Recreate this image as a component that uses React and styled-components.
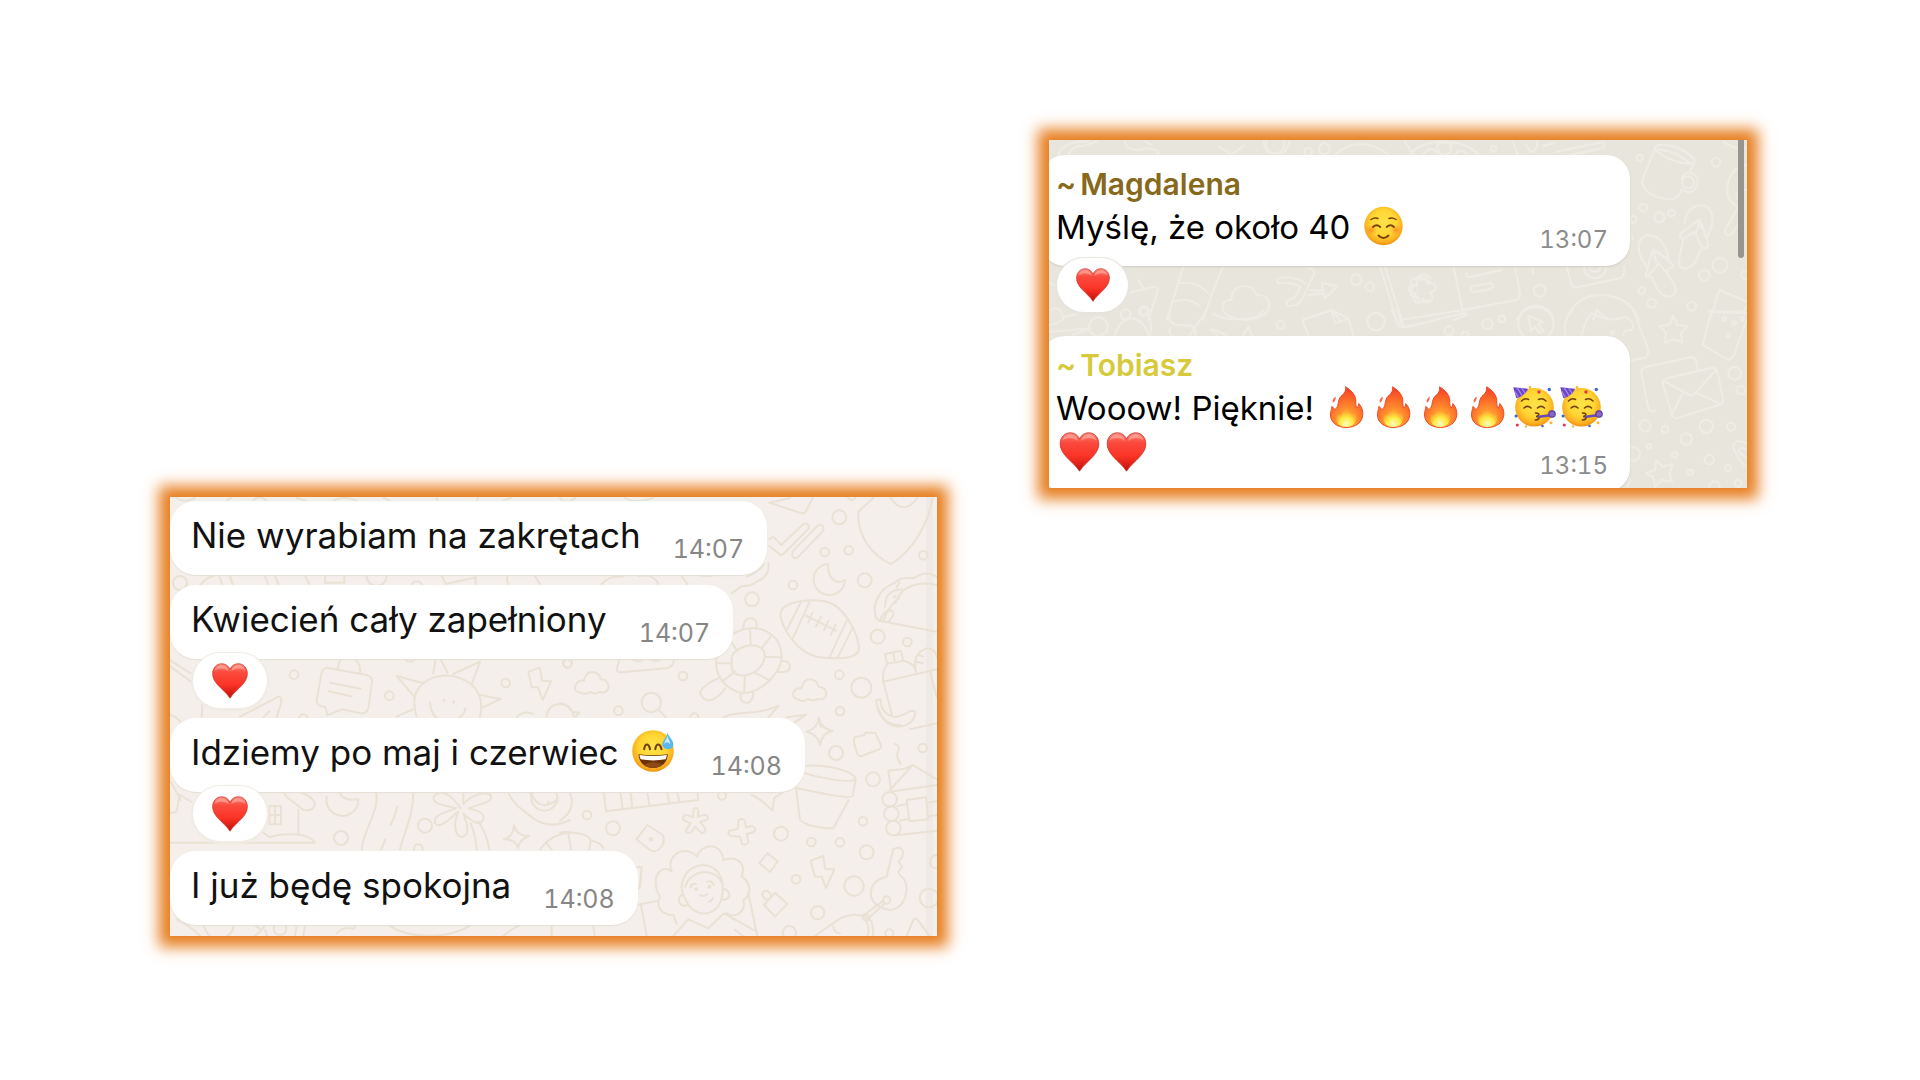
import React, { useId } from "react";
import styled, { createGlobalStyle } from "styled-components";

const GlobalStyle = createGlobalStyle`
  *, *::before, *::after { box-sizing: border-box; }
  body { margin: 0; background: #fff; }
`;

const Page = styled.main`
  display: grid;
  grid-template-columns: 767fr 698fr;
  gap: 112px;
  align-items: start;
  padding: 140px 173px 140px 170px;
  font-family: Inter, "Liberation Sans", sans-serif;
`;

const Panel = styled.section`
  position: relative;
  overflow: hidden;
  margin-top: ${(p) => p.$drop || 0}px;
  background: ${(p) => p.$bg};
  box-shadow: 0 0 14px 11px #e77e1f;
`;

const Wallpaper = styled.svg`
  position: absolute;
  inset: 0;
  width: 100%;
  height: 100%;
  fill: none;
  stroke: ${(p) => p.$ink};
  stroke-width: 6;
  stroke-linecap: round;
  stroke-linejoin: round;
`;

const EdgeShade = styled.div`
  position: absolute;
  top: 0;
  bottom: 0;
  right: 4px;
  width: 7px;
  background: #eeeae5;
`;

const ScrollThumb = styled.div`
  position: absolute;
  top: 0;
  right: 3px;
  width: 6px;
  height: 118px;
  border-radius: 0 0 3px 3px;
  background: #969590;
`;

const List = styled.ul`
  position: relative;
  display: flex;
  flex-direction: column;
  gap: ${(p) => p.$gap}px;
  margin: 0;
  padding: ${(p) => p.$pad};
  list-style: none;
`;

const Item = styled.li`
  display: flex;
  flex-direction: column;
  align-items: flex-start;
`;

const Bubble = styled.article`
  display: flex;
  align-items: flex-end;
  gap: 32px;
  padding: 12px 23px 10px 21px;
  border-radius: 26px;
  background: #fff;
  box-shadow: 0 1px 1px #e4dfd7;
`;

const Text = styled.p`
  margin: 0;
  padding-bottom: 8px;
  font-size: 35px;
  line-height: 44px;
  color: #111;
  white-space: nowrap;
`;

const Time = styled.time`
  font-size: 25px;
  font-variant-numeric: tabular-nums;
  line-height: 32px;
  color: #868686;
`;

const GroupBubble = styled.article`
  display: grid;
  align-self: stretch;
  margin: 0 0 ${(p) => (p.$last ? -4 : 0)}px -8px;
  padding: 9px 22px 11px 15px;
  border-radius: 24px;
  background: #fff;
  box-shadow: 0 1px 2px #cfccc2;
`;

const Sender = styled.h2`
  display: flex;
  gap: 4px;
  margin: 0 0 1px;
  font-size: 30px;
  font-weight: 600;
  line-height: 40px;
  color: ${(p) => p.$color};
`;

const GroupText = styled.p`
  grid-area: 2 / 1;
  margin: 0;
  padding-bottom: 5px;
  font-size: 33px;
  line-height: 45px;
  color: #000;
  white-space: nowrap;
`;

const GroupTime = styled.time`
  grid-area: 2 / 1;
  align-self: end;
  justify-self: end;
  font-size: 24px;
  font-variant-numeric: tabular-nums;
  line-height: 30px;
  color: #8c8c8c;
`;

const Reaction = styled.button`
  position: relative;
  display: grid;
  place-items: center;
  width: ${(p) => p.$w}px;
  height: ${(p) => p.$h}px;
  margin: ${(p) => p.$m};
  padding: 0;
  border: 0;
  border-radius: 28px;
  background: #fff;
  box-shadow: 0 1px 1px 2px ${(p) => p.$ring};
`;

const Glyph = styled.svg`
  display: inline-block;
  width: ${(p) => p.$w}px;
  height: ${(p) => p.$h}px;
  vertical-align: ${(p) => p.$shift || 0}px;
`;

function Heart({ w = 36, h = 36, shift }) {
  const id = useId();
  return (
    <Glyph $w={w} $h={h} $shift={shift} viewBox="0 0 40 40" role="img" aria-label="heart">
      <defs>
        <linearGradient id={id} x1="0" y1="0" x2="0" y2="1">
          <stop offset="0" stopColor="#ff8a7c" />
          <stop offset=".25" stopColor="#fb4a3e" />
          <stop offset=".6" stopColor="#fb3527" />
          <stop offset="1" stopColor="#c30d0a" />
        </linearGradient>
      </defs>
      <path
        d="M20 39.2C17 34 11 29.500 6.500 24.500C2.800 20.300.7 16.500.7 11.800C.7 5.500 5 .8 10.700.8C15 .8 18.500 3.200 20 7.200C21.500 3.200 25 .8 29.300.8C35 .8 39.300 5.500 39.300 11.800C39.300 16.500 37.200 20.300 33.500 24.500C29 29.500 23 34 20 39.200Z"
        fill={`url(#${id})`}
        stroke="#c8312b"
        strokeWidth=".8"
      />
      <path d="M3 8.500C4.500 4 8 2.500 11 2.600C15 2.800 17.500 5 18.500 9C14 5.500 8 5 3 8.500ZM21.500 9C22.500 5 25 2.800 29 2.600C32 2.500 35.500 4 37 8.500C32 5 26 5.500 21.500 9Z" fill="#ffb3a8" opacity=".6" />
    </Glyph>
  );
}

function FaceDefs({ id }) {
  return (
    <defs>
      <radialGradient id={id} cx=".5" cy=".42" r=".6">
        <stop offset="0" stopColor="#ffe34a" />
        <stop offset=".55" stopColor="#ffd633" />
        <stop offset=".85" stopColor="#fbab1d" />
        <stop offset="1" stopColor="#e8890f" />
      </radialGradient>
    </defs>
  );
}

function Sweat() {
  const id = useId();
  return (
    <Glyph $w={50} $h={42} $shift={-7} viewBox="-4 0 50 42" role="img" aria-label="grinning face with sweat">
      <FaceDefs id={id} />
      <circle cx="21" cy="21" r="20.800" fill={`url(#${id})`} />
      <path d="M12.200 19.200C13 13 16.800 13 18 19.200M23.300 19.200C24.200 13 28 13 29.500 19.200" fill="none" stroke="#70400d" strokeWidth="2.100" strokeLinecap="round" />
      <path d="M6.500 24.300Q21 26 35.800 24.300C35.500 33 29 38 21.200 38C13 38 7 33 6.500 24.300Z" fill="#6b3208" />
      <path d="M7.500 25Q21 27 34.800 25C34.600 27 34.200 28.300 33.600 29.300Q21 31.500 8.800 29.300C8 28 7.600 26.500 7.500 25Z" fill="#fff" />
      <path d="M12 34.500Q21 30 30.500 34.500Q26 38 21 38Q16 38 12 34.500Z" fill="#8d4a14" />
      <path d="M35.500 3C37.500 7.500 41.400 10.500 41.400 14.500C41.400 17.500 39 19.200 36 19.200C33 19.200 30.200 17.300 30.400 14C30.700 10.500 34.500 8 35.500 3Z" fill="#5bb8ee" />
      <path d="M35.500 5.500C36 9 38.500 11 38 14Q35 10.500 32 14C32.500 11 35 9 35.500 5.500Z" fill="#c9edff" />
    </Glyph>
  );
}

function Smile() {
  const id = useId();
  const blush = useId();
  return (
    <Glyph $w={47} $h={40} $shift={-7} viewBox="-3.500 0 47 40" role="img" aria-label="smiling face">
      <FaceDefs id={id} />
      <defs>
        <radialGradient id={blush}>
          <stop offset="0" stopColor="#ff7a28" stopOpacity=".75" />
          <stop offset="1" stopColor="#ff9a28" stopOpacity="0" />
        </radialGradient>
      </defs>
      <circle cx="20" cy="20" r="19.200" fill={`url(#${id})`} />
      <ellipse cx="7.500" cy="24" rx="6.500" ry="5.500" fill={`url(#${blush})`} />
      <ellipse cx="32.500" cy="24" rx="6.500" ry="5.500" fill={`url(#${blush})`} />
      <g fill="none" stroke="#75420c" strokeWidth="1.500" strokeLinecap="round">
        <path d="M7.500 13.500Q11 11 14.500 12.500M25.500 12.500Q29 11 32.500 13.500" />
        <path d="M9.500 21Q13 17.600 16.800 21M23.200 21Q27 17.600 30.500 21" strokeWidth="1.800" />
        <path d="M15 29.500Q20 34.500 25 29.500" strokeWidth="1.800" />
      </g>
    </Glyph>
  );
}

function Fire() {
  const id = useId();
  const core = useId();
  return (
    <Glyph $w={47} $h={42} $shift={-8} viewBox="-6.500 0 47 42" role="img" aria-label="fire">
      <defs>
        <radialGradient id={id} cx=".5" cy=".85" r=".8">
          <stop offset="0" stopColor="#ffc23c" />
          <stop offset=".4" stopColor="#ff8f2e" />
          <stop offset=".75" stopColor="#fa6228" />
          <stop offset="1" stopColor="#f0442a" />
        </radialGradient>
        <radialGradient id={core} cx=".5" cy=".85" r=".7">
          <stop offset="0" stopColor="#fffcc0" />
          <stop offset=".5" stopColor="#ffe93e" />
          <stop offset="1" stopColor="#ffa62e" stopOpacity=".3" />
        </radialGradient>
      </defs>
      <path
        d="M16 .8C21 3.500 26.500 9 26.300 15C26.200 18.500 26.500 21 27.500 22C29 21 28.800 19 29.300 17.600C32.500 21 33.500 25 33.300 28.500C33 36.500 26 41.500 16.800 41.500C7.500 41.500 1 36 1 29C.8 25.500 2.500 23 2.300 20.500C4 21 4.600 23.500 5.500 23.500C9.500 21 8 15.500 10.500 11.500C13 8.500 17 6.500 16 .8Z"
        fill={`url(#${id})`}
        stroke="#ee4a2a"
        strokeWidth="1"
      />
      <path d="M17 21C18.500 25 20 27 22.500 28C24 29 25 27 25.500 25.500C28.500 32 26.500 41 16.800 41C8.500 41 5.500 34.500 7.500 28.500C9.500 30.500 10.500 29 11.500 28C14 26 16 24.500 17 21Z" fill={`url(#${core})`} />
      <path d="M6.200 10.500C4 12 2.500 14 3.300 16.800C5.500 15.500 6.500 13.500 6.200 10.500Z" fill="#f4694f" />
    </Glyph>
  );
}

function Party() {
  const id = useId();
  return (
    <Glyph $w={47} $h={42} $shift={-8} viewBox="-1.500 0 47 42" role="img" aria-label="partying face">
      <FaceDefs id={id} />
      <circle cx="22" cy="21.300" r="19.300" fill={`url(#${id})`} />
      <path d="M.8 1.200L15.500 2.800C14 7 8.500 11.500 3.800 12.300Z" fill="#6a45c4" />
      <path d="M4.500 1.600L9.800 9.800M9 2L12.800 7.500M2 5L6 11.500" stroke="#a88bf0" strokeWidth="1.300" />
      <g fill="none" stroke="#70400d" strokeWidth="1.600" strokeLinecap="round">
        <path d="M9 15Q12.500 11.500 16 13.500M26 13.500Q30 11.500 33.500 15" />
        <path d="M11.500 22Q15 18.600 18.500 22M25 22Q28.500 18.600 32 22" />
        <path d="M23 27Q27.500 27 26 29.300Q24.500 30.500 23.500 30.500Q27.500 30.500 26.500 32.500Q25.500 34 22.800 34" />
      </g>
      <path d="M26.500 30.800L38 29.300" stroke="#6b4aae" strokeWidth="2.600" strokeLinecap="round" />
      <circle cx="39.500" cy="28" r="3.200" fill="#8566ca" stroke="#5b3da0" strokeWidth="1.200" />
      <g fill="#3d68c8"><circle cx="36.800" cy="3.500" r="1.700" /><circle cx="3.600" cy="30" r="1.600" /><circle cx="30" cy="40" r="1.300" /></g>
      <g fill="#e0374b"><circle cx="26.500" cy="6" r="1.700" /><circle cx="4.800" cy="39" r="1.600" /></g>
      <g fill="#f4b73e"><circle cx="17.500" cy="1.500" r="1.400" /><circle cx="38.500" cy="36.800" r="1.500" /><circle cx="13.500" cy="40.500" r="1.200" /></g>
    </Glyph>
  );
}

/* Doodles are drawn on a grid three times finer than the panel. */
function Doodles({ x, y, dots, d }) {
  return (
    <g transform={`translate(${x} ${y}) scale(${1 / 3})`}>
      {dots.map(([cx, cy, r]) => (
        <circle key={`${cx}-${cy}-${r}`} cx={cx} cy={cy} r={r} />
      ))}
      <path d={d} />
    </g>
  );
}

const beige = [
  {
    x: -20,
    y: -27,
    dots: [[90, 339, 21], [432, 614, 13], [718, 677, 13], [1067, 639, 13], [1253, 580, 13], [882, 691, 2], [911, 696, 2], [460, 745, 12], [680, 318, 30], [800, 352, 18], [780, 555, 20]],
    d: `M80 84Q105 100 135 84M230 92L245 82M310 92Q325 72 350 92M440 84L470 92M550 92Q580 75 620 92M700 84L720 92M860 84L862 92M980 92L985 82M1060 92L1085 82
      M150 345Q170 322 190 318M208 318L216 342M240 318L247 342M345 318L354 342M375 318L385 342M465 318L478 342M525 318V338H583V318M875 318L888 342L978 322L976 342M1073 318Q1068 330 1075 342M1155 318L1170 342
      M62 572L122 610M62 590L130 640M62 735Q95 745 100 780M150 670Q160 700 155 740M270 740L385 680Q398 680 393 700L380 742M340 742L357 724
      M563 598Q570 550 600 560Q635 575 630 608M535 594L650 615Q668 620 666 636L655 715Q650 732 632 730L575 718L532 736L527 712Q498 708 500 690L515 608Q520 592 535 594M540 638L632 656M536 664L603 679
      M800 740Q775 660 838 628Q900 600 960 640Q1005 675 990 740M840 698Q845 755 893 752Q940 750 946 715M850 610L858 560M868 560L893 608M910 612L990 575L966 640M992 675L1052 687L998 712M793 680L740 618L820 640M740 740L788 718
      M1135 605L1170 593L1176 632L1203 634L1178 690L1164 652L1145 652ZM1100 742Q1120 720 1150 732M1190 740Q1195 700 1235 703Q1258 705 1260 720`,
  },
  {
    x: 390,
    y: -27,
    dots: [[838, 142, 21], [794, 246, 13], [866, 241, 13], [1090, 256, 13], [914, 331, 21], [699, 345, 13], [576, 388, 21], [953, 500, 21], [1042, 516, 13], [22, 580, 13], [369, 618, 13], [838, 614, 13], [904, 653, 30], [840, 723, 13], [274, 697, 29], [175, 722, 13], [403, 742, 12], [1004, 380, 2], [1015, 384, 2], [1005, 398, 2]],
    d: `M0 85Q20 105 45 84M195 84Q225 102 280 84M628 98L690 84M628 98L725 130Q735 132 740 120L758 84M865 84Q875 96 885 84
      M895 125L940 84M895 125C890 200 940 260 994 282C1060 240 1105 160 1118 84M992 84Q1030 140 1072 84
      M628 208Q638 196 648 208L664 225L728 164Q740 155 746 168Q748 174 742 180L670 252Q662 258 655 250L628 228M700 242L772 168Q786 158 790 172Q792 178 786 186L715 260Q705 270 698 260Q694 252 700 242
      M805 281A47 47 0 1 0 855 330C835 345 800 330 805 281M625 280Q630 320 590 335Q575 350 545 348L515 370M560 320Q590 310 612 283M125 342Q150 315 185 320Q210 305 240 318Q280 310 295 342M365 318L382 342M420 316Q440 322 460 316
      M662 440C655 395 740 385 800 395C860 410 895 500 897 535C895 570 820 568 770 560C710 545 670 480 662 440M680 480L722 398M697 508L748 397M808 563L860 452M833 563L877 475M738 437L828 482M757 428L745 458M783 440L768 470M805 453L792 480M826 465L813 494
      M1130 320C1100 300 1075 315 1060 325Q1020 320 1005 338C960 355 935 400 947 440Q955 455 975 455L1130 485M970 452C985 410 1000 400 1010 390C1030 340 1090 335 1130 345M975 410Q975 360 1025 358M963 448Q965 430 990 420Q1005 425 997 440L985 457M1010 352L1018 337
      M550 478Q550 440 578 445Q595 452 588 478M480 530C510 480 580 460 620 485C670 510 675 570 650 605C620 650 570 680 530 665C470 640 455 585 480 530M515 560C530 530 580 515 605 535C625 555 610 590 580 608C550 625 520 615 515 595ZM570 478L572 522M632 500L605 535M662 562L616 560M630 632L585 608M552 668L555 622M490 632L525 605M468 580L515 580M508 508L532 542M652 605Q690 610 690 590Q690 570 662 575M482 622Q435 640 420 665Q425 695 455 690Q480 680 495 655M542 668Q538 700 562 698Q580 695 580 665
      M178 568L170 598Q172 608 185 607L320 595Q340 590 342 570M218 568Q235 580 250 568M270 568Q290 578 300 568
      M62 668Q40 665 46 648Q52 630 72 632Q78 605 98 606Q120 608 122 628Q145 630 146 650Q143 672 118 666Q105 675 92 666Q75 675 62 668M718 690Q695 685 700 668Q706 652 725 655Q730 628 750 628Q772 630 775 650Q800 652 799 672Q796 692 772 687Q760 695 745 687Q730 697 718 690
      M980 578L975 552L1022 542L1030 572M1000 548L1004 572M985 580Q1010 578 1030 572Q1065 580 1068 605M970 635L1130 598M985 580Q965 600 970 635L997 740M1068 605Q1055 550 1100 535Q1125 535 1130 560M1075 555L1090 560M1070 575L1088 580M1110 605L1130 680
      M948 690L962 688C960 715 980 742 1010 740C1040 738 1045 715 1065 725C1068 780 960 800 948 690M955 715Q970 765 1020 765M1050 778L1130 760M0 700Q35 705 42 740M38 725L58 728L48 740M295 718L318 742M490 742C530 720 580 740 655 708L625 742M680 742L738 734L700 760M775 745L782 770`,
  },
  {
    x: -20,
    y: 203,
    dots: [[573, 414, 21], [825, 377, 21], [805, 446, 13], [390, 686, 19], [1183, 293, 39], [1195, 308, 2]],
    d: `M62 245L92 300L85 282L125 306M62 340L80 335L88 290M62 428H495Q480 405 430 403Q390 400 360 412L340 398M340 276L395 276M400 276L410 290L460 330Q490 335 495 312Q490 290 450 276M358 318H393V373H358ZM375 318V373M358 345H393M445 330V400
      M568 276Q580 305 625 298A48 48 0 1 1 530 290M678 276C690 330 640 390 635 448M790 276C790 350 760 400 750 448M742 320Q735 350 722 374M706 418L694 448
      M932 325C915 300 895 276 870 278C840 285 845 310 880 315L918 325C870 340 850 350 855 370C870 390 905 350 925 335C905 385 920 415 940 410C965 400 945 355 940 340C965 365 990 380 1000 358C1005 335 975 330 955 325C990 310 1030 310 1022 285C1000 270 960 290 940 312V280M962 370Q978 410 980 448M985 365Q1010 400 1018 448
      M1092 376Q1100 410 1138 408Q1108 418 1104 444Q1098 418 1062 418Q1090 410 1092 376M1075 276C1085 310 1125 335 1150 355Q1200 390 1260 360M1170 448L1190 425Q1220 400 1260 398M1190 430L1205 448M1140 276Q1170 340 1220 300
      M80 658Q125 680 150 708M160 676Q170 700 180 708M250 676Q250 700 230 708M315 676L335 690L315 708M345 676L335 690M345 690L352 708M440 676L435 708M465 676L460 708M560 700Q580 680 600 685Q620 690 612 676M718 676C780 720 900 715 962 676M1060 708Q1085 685 1110 676M1205 676V708`,
  },
  {
    x: 390,
    y: 203,
    dots: [[840, 34, 13], [1088, 144, 13], [828, 159, 21], [939, 238, 21], [486, 287, 12], [81, 345, 13], [159, 385, 21], [909, 364, 13], [663, 401, 21], [754, 426, 13], [840, 427, 13], [920, 457, 21], [708, 538, 13], [882, 558, 29], [773, 638, 20], [688, 698, 20], [988, 700, 12], [1130, 485, 20], [1107, 594, 28], [273, 417, 4], [989, 298, 22], [994, 341, 22], [1000, 384, 22], [409, 568, 3], [448, 560, 3], [980, 600, 11], [917, 652, 9]],
    d: `M777 55Q782 85 818 93Q785 100 781 134Q772 102 740 95Q772 85 777 55M885 112L912 106Q915 95 928 98L945 98L963 135Q965 142 958 148L905 168Q895 170 892 162L882 128Q880 118 885 112M1005 132Q1020 135 1015 152Q1005 170 1022 192
      M725 200C770 190 870 205 887 235C880 255 760 230 722 215M887 237L878 288Q870 300 710 264M708 264L720 360Q750 385 820 385L866 300
      M985 212L1035 206L1058 195L1130 238M985 212L992 265M990 270L1058 195M990 275L1130 255M1012 318L1042 312M1040 300L1098 292L1105 358L1048 364ZM1105 308L1130 304M1105 348L1130 346M1020 362L1048 356M1008 406L1130 392
      M30 278Q50 330 0 362M132 280L138 334L415 300L412 278M182 278L188 328M212 278L217 322M262 278L268 315M322 278L328 308M352 278L358 304M575 285Q600 295 638 332L642 295L670 276
      M400 330Q408 318 415 330L414 350L434 344Q448 348 443 358L420 366L436 385Q438 398 425 400L406 380L392 398Q378 402 378 390L392 370L370 360Q366 348 378 344L400 352Z
      M535 362Q545 350 554 362L558 382L578 378Q590 385 582 396L560 402L565 425Q560 438 546 432L540 410L514 408Q500 402 508 392L534 386Z
      M262 375L308 405Q318 425 300 445Q285 460 270 450L229 418ZM622 460L653 484L630 516L598 490ZM752 482L790 468L795 506L823 508L798 564L785 530L765 530ZM0 398L18 396Q85 400 92 420L88 448M25 400L33 448M92 422Q122 425 130 445M225 502H245L240 560Q235 568 228 565M230 615L290 603M243 615L260 708M100 676L104 708
      M340 645C305 645 285 620 300 590C280 560 285 520 305 510C320 500 335 515 335 515C320 470 360 440 400 460L410 470C425 430 480 425 490 475V480C530 465 560 490 545 530C575 550 575 585 550 600C560 640 520 655 500 640M340 645L350 672M378 600C350 560 370 500 430 495C485 500 495 550 485 595C470 655 400 655 378 600M376 560C390 510 460 500 483 545M370 582Q350 590 360 610Q368 622 382 615M488 565Q510 570 508 590Q500 602 486 598M392 562Q395 548 408 552M442 545Q455 540 462 555M420 585Q430 592 442 582M445 605Q455 605 458 595M340 708L385 658L445 685L492 640L590 695M565 580L592 708M525 690L550 708
      M645 578L682 612L645 650L612 615ZM622 600Q600 590 610 575Q625 565 635 590M1000 448Q1020 435 1030 455Q1028 475 1015 485L1027 500L1015 515L1022 528Q1045 545 1038 580Q1030 625 990 630Q935 620 932 580Q935 540 980 530ZM975 610L922 658M970 602L912 645
      M765 708L840 655Q900 630 935 665Q940 690 940 708M820 680Q822 700 840 700M920 665Q930 690 922 708M1040 708L1060 660Q1065 650 1075 662L1108 708`,
  },
];

const grey = [
  {
    x: -19,
    y: -20,
    dots: [[883, 86, 16], [835, 95, 12], [979, 479, 16], [1020, 500, 13], [287, 582, 14], [342, 573, 14], [735, 72, 28]],
    d: `M85 104C90 80 130 60 175 64M115 102Q130 75 160 78L200 64M285 64Q290 100 350 85Q400 90 380 104M345 64L365 74M565 78L605 104L640 78M700 64Q705 100 735 100V104M780 64Q770 95 748 104M915 104Q990 40 1075 104M1125 64L1150 104
      M460 440C440 500 430 540 410 600M580 440Q550 500 520 600M445 490Q500 480 535 520M430 545Q480 530 510 560M60 490L130 520M250 530L370 500Q385 500 382 515L355 600M325 480L345 510
      M600 590C565 575 575 535 605 540C600 495 665 480 680 525C720 520 730 570 700 585C670 605 630 600 600 590M745 490Q735 475 755 472Q800 470 825 490M745 490Q790 485 810 500C800 540 780 535 768 545Q770 560 785 558C830 550 825 500 850 470Q860 445 835 445M840 510L880 512L875 488L922 498L885 535L880 520L835 525M1050 440L1100 600M1065 440L1115 600
      M1170 480Q1190 470 1200 490M1150 500Q1130 480 1160 475Q1180 450 1200 475M1150 500Q1130 530 1160 530Q1170 555 1195 540M820 600L905 570L930 600M62 570Q95 550 100 600`,
  },
  {
    x: 351,
    y: -20,
    dots: [[281, 86, 8], [948, 127, 13], [719, 113, 9], [864, 187, 18], [730, 263, 11], [778, 292, 15], [814, 279, 10], [700, 298, 10], [960, 436, 22], [913, 466, 16], [419, 512, 18], [725, 512, 10], [755, 550, 13], [875, 559, 13], [585, 440, 34], [585, 440, 16], [306, 596, 10], [1035, 465, 11]],
    d: `M30 104C60 55 190 50 235 104M70 104Q95 70 115 104M110 75Q130 60 155 75L150 98Q130 110 118 98ZM165 104Q180 80 205 104M340 64L352 104M378 75L392 96Q415 90 412 64M430 78L465 68M470 95L608 66Q618 75 608 85L510 104
      M765 80C800 60 880 100 885 125C870 145 775 110 765 85M775 88Q830 95 868 128M765 85L725 185Q740 235 815 238Q838 235 845 208M882 130L868 158M845 208C870 230 895 205 893 180Q890 160 870 158M845 180Q845 165 862 158
      M1040 135C990 140 975 195 985 230C990 250 1010 258 1015 258M1040 210Q1005 210 1010 235M1015 260L975 330Q975 350 992 345L1015 315
      M855 310C855 270 890 245 920 260C950 285 935 330 920 350L925 378Q915 390 905 382L892 412C880 445 850 455 838 435C835 410 848 370 850 358Q838 355 840 342Q870 320 895 300Q910 310 915 350M895 300L905 325M850 358Q865 345 885 335L905 382M890 335L900 300
      M740 440C710 400 705 360 740 345C790 345 800 390 808 425L818 432Q822 445 808 445L800 460C825 490 840 520 810 530C780 530 765 500 755 470L738 470Q735 460 742 450Q750 410 760 390Q790 405 808 425M760 390L768 425M745 465Q765 445 775 430L800 458
      M160 440L188 570L350 540Q362 530 360 520L345 440M200 460Q195 475 215 470L305 450M215 498Q205 515 222 516L270 508Q285 500 275 490ZM60 475Q75 465 80 482L82 492Q105 485 108 502Q105 515 90 518Q105 535 90 545Q78 550 70 535Q60 555 45 545Q38 530 48 520Q25 518 27 505Q35 490 52 497Q45 480 60 475M500 440L515 495Q520 505 532 502L660 475Q675 470 672 440M395 440L400 460
      M0 600L190 570L200 585L160 600M350 600Q370 560 410 562Q450 565 460 600M498 600Q530 520 610 525Q690 530 718 600M580 600L590 570L625 600M930 600L958 510L1040 545M945 575H1030L1040 560M970 64Q1000 90 1040 85M690 345Q705 352 695 358`,
  },
  {
    x: -19,
    y: 170,
    dots: [[287, 14, 15], [342, 5, 12], [205, 50, 28], [752, 44, 12], [1038, 35, 26]],
    d: `M60 45Q90 40 105 20L200 0M60 65L180 55M130 75L170 58M255 75Q270 25 310 25Q345 35 355 75M350 10Q370 30 360 75M420 0C410 40 430 50 480 45Q500 55 495 75M420 55Q415 70 425 75M530 0L480 75M550 10Q590 40 680 20L700 0M540 60L560 75M548 58L590 75M640 75L655 50L665 75M820 40L835 75M820 40Q815 28 830 25L905 0L955 25L970 75M905 0L915 40L950 28M1085 0L1105 45Q1115 55 1130 50L1200 35M1100 0L1120 45`,
  },
  {
    x: 351,
    y: 170,
    dots: [[147, 62, 13], [262, 43, 15], [305, 27, 10], [408, 40, 53], [195, 75, 10], [973, 27, 6], [1002, 40, 6], [1027, 26, 5], [985, 76, 5], [1004, 190, 19], [1023, 240, 13], [735, 347, 17], [795, 358, 10], [919, 349, 20], [993, 350, 12], [859, 387, 17], [746, 409, 7], [824, 435, 8], [928, 449, 14], [871, 487, 8], [984, 475, 9], [700, 432, 20], [943, 530, 16], [1014, 520, 10], [637, 68, 5]],
    d: `M0 35L15 52L190 10M385 18L428 35L415 42L430 62L420 70L405 50L393 62ZM495 75Q490 20 520 0M545 75Q560 20 575 10Q640 40 675 20Q710 40 695 60Q670 60 670 75M700 0L745 120Q745 140 730 145L690 152
      M820 17L833 44L862 48L842 70L848 98L822 88L795 98L798 68L778 48L808 44ZM935 0L908 105L985 150L1000 140L1040 30M925 5L1040 10
      M765 302Q750 310 745 295L724 190Q722 175 740 170L870 142Q885 140 888 150L893 178M800 205L930 175Q950 170 952 185L970 270Q970 282 955 285L840 322Q820 330 815 312L788 220Q785 210 800 205M790 212L868 255Q880 260 885 250L948 180M812 318L852 245M888 248L962 282
      M768 450L788 470L818 462L808 492L816 515L785 510L765 530L760 502L738 490L765 480ZM1040 400C1010 385 995 400 1003 420Q1020 460 1040 470M1040 420Q1020 405 1015 425L1040 445M690 510L682 530`,
  },
];

export default function App() {
  return (
    <>
      <GlobalStyle />
      <Page>
        <Panel $bg="#f4efea" $drop={357} aria-label="Private chat">
          <EdgeShade />
          <Wallpaper $ink="#eae1d5" viewBox="0 0 767 439" preserveAspectRatio="xMinYMin slice" aria-hidden="true">
            {beige.map((part, i) => (
              <Doodles key={i} {...part} />
            ))}
          </Wallpaper>
          <List $gap={10} $pad="4px 0 11px">
            <Item>
              <Bubble>
                <Text>Nie wyrabiam na zakrętach</Text>
                <Time>14:07</Time>
              </Bubble>
            </Item>
            <Item>
              <Bubble>
                <Text>Kwiecień cały zapełniony</Text>
                <Time>14:07</Time>
              </Bubble>
              <Reaction $w={74} $h={55} $m="-6px 0 0 23px" $ring="#f0ebe4">
                <Heart />
              </Reaction>
            </Item>
            <Item>
              <Bubble>
                <Text>
                  Idziemy po maj i czerwiec <Sweat />
                </Text>
                <Time>14:08</Time>
              </Bubble>
              <Reaction $w={74} $h={55} $m="-6px 0 0 23px" $ring="#f0ebe4">
                <Heart />
              </Reaction>
            </Item>
            <Item>
              <Bubble>
                <Text>I już będę spokojna</Text>
                <Time>14:08</Time>
              </Bubble>
            </Item>
          </List>
        </Panel>

        <Panel $bg="#e8e6dc" aria-label="Group chat">
          <Wallpaper $ink="#eeece4" viewBox="0 0 698 348" preserveAspectRatio="xMinYMin slice" aria-hidden="true">
            {grey.map((part, i) => (
              <Doodles key={i} {...part} />
            ))}
          </Wallpaper>
          <ScrollThumb />
          <List $gap={24} $pad="15px 117px 0 0">
            <Item>
              <GroupBubble>
                <Sender $color="#86691b">
                  <span>~</span>
                  <span>Magdalena</span>
                </Sender>
                <GroupText>
                  Myślę, że około 40 <Smile />
                </GroupText>
                <GroupTime>13:07</GroupTime>
              </GroupBubble>
              <Reaction $w={71} $h={54} $m="-8px 0 0 8px" $ring="#e6e4dd">
                <Heart w={34} h={34} />
              </Reaction>
            </Item>
            <Item>
              <GroupBubble $last>
                <Sender $color="#d6ca3a">
                  <span>~</span>
                  <span>Tobiasz</span>
                </Sender>
                <GroupText>
                  Wooow! Pięknie! <Fire />
                  <Fire />
                  <Fire />
                  <Fire />
                  <Party />
                  <Party />
                  <br />
                  <Heart w={47} h={40} shift={-7} />
                  <Heart w={47} h={40} shift={-7} />
                </GroupText>
                <GroupTime>13:15</GroupTime>
              </GroupBubble>
            </Item>
          </List>
        </Panel>
      </Page>
    </>
  );
}
